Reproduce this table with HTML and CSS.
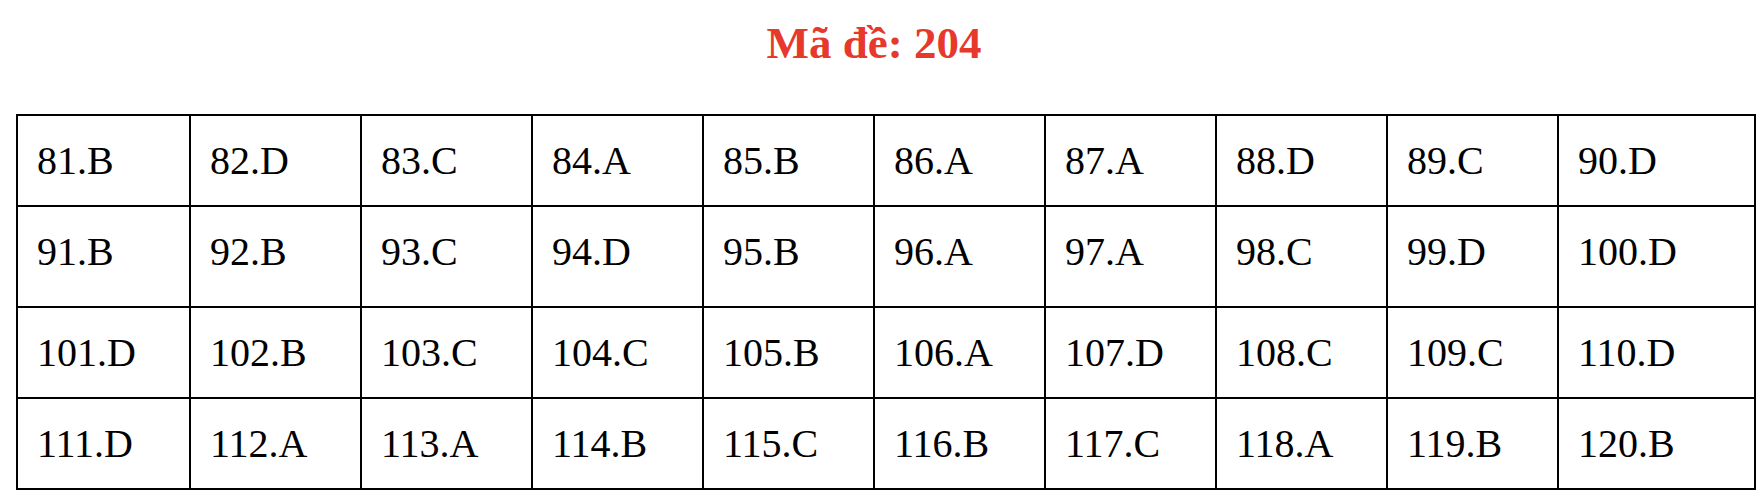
FILE: index.html
```html
<!DOCTYPE html>
<html lang="vi">
<head>
<meta charset="utf-8">
<title>Mã đề: 204</title>
<link rel="stylesheet" href="styles.css">
</head>
<body>
<h1 class="title">Mã đề: 204</h1>
<table class="answers">
  <colgroup>
    <col class="c-first"><col class="c-mid"><col class="c-mid"><col class="c-mid"><col class="c-mid"><col class="c-mid"><col class="c-mid"><col class="c-mid"><col class="c-mid"><col class="c-last">
  </colgroup>
  <tr class="row">
    <td>81.B</td><td>82.D</td><td>83.C</td><td>84.A</td><td>85.B</td><td>86.A</td><td>87.A</td><td>88.D</td><td>89.C</td><td>90.D</td>
  </tr>
  <tr class="row row-tall">
    <td>91.B</td><td>92.B</td><td>93.C</td><td>94.D</td><td>95.B</td><td>96.A</td><td>97.A</td><td>98.C</td><td>99.D</td><td>100.D</td>
  </tr>
  <tr class="row">
    <td>101.D</td><td>102.B</td><td>103.C</td><td>104.C</td><td>105.B</td><td>106.A</td><td>107.D</td><td>108.C</td><td>109.C</td><td>110.D</td>
  </tr>
  <tr class="row">
    <td>111.D</td><td>112.A</td><td>113.A</td><td>114.B</td><td>115.C</td><td>116.B</td><td>117.C</td><td>118.A</td><td>119.B</td><td>120.B</td>
  </tr>
</table>
</body>
</html>
```

FILE: styles.css
```css
html, body {
  margin: 0;
  padding: 0;
  background: #ffffff;
}

body {
  font-family: "Liberation Serif", "Times New Roman", serif;
  color: #000000;
}

.title {
  margin: 0 16px 0 0;
  padding-top: 17px;
  font-size: 45px;
  line-height: 52px;
  font-weight: bold;
  color: #e6392b;
  text-align: center;
}

.answers {
  margin: 45px 0 0 16px;
  width: 1738px;
  table-layout: fixed;
  border-collapse: collapse;
  font-size: 40px;
  line-height: 40px;
}

.c-first { width: 173px; }
.c-mid { width: 171px; }
.c-last { width: 197px; }

.answers td {
  border: 2px solid #000000;
  padding: 25px 0 0 19px;
  vertical-align: top;
  white-space: nowrap;
}

.row { height: 91px; }
.row-tall { height: 101px; }
```
